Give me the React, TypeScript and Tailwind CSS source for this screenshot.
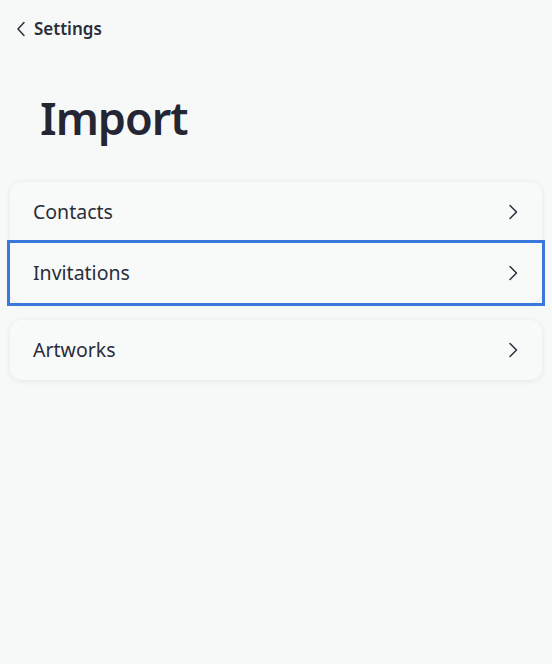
import React from "react";

function Chevron({ className = "" }: { className?: string }) {
  return (
    <svg width="12" height="16" viewBox="0 0 12 16" fill="none" className={className}>
      <path d="M3 1.5 L9.5 8 L3 14.5" stroke="#2b2e3a" strokeWidth="1.5" strokeLinecap="round" strokeLinejoin="round" />
    </svg>
  );
}

function BackChevron() {
  return (
    <svg width="10" height="16" viewBox="0 0 10 16" fill="none">
      <path d="M8 1.5 L2 8 L8 14.5" stroke="#2b2e3a" strokeWidth="1.5" strokeLinecap="round" strokeLinejoin="round" />
    </svg>
  );
}

function Row({ label, focused = false }: { label: string; focused?: boolean }) {
  return (
    <div
      className={
        "flex h-[60px] items-center justify-between pl-[23px] pr-[23px] " +
        (focused ? "outline-[3px] outline-solid outline-[#3a78dc]" : "")
      }
    >
      <span className="text-[19.5px] text-[#2a2d3a]">{label}</span>
      <Chevron />
    </div>
  );
}

export default function App() {
  return (
    <div
      className="min-h-[664px] w-[552px] bg-[#f7f9f9]"
      style={{ fontFamily: '"Noto Sans", "Open Sans", sans-serif' }}
    >
      <div className="flex items-center gap-[8px] pl-[16px] pt-[16px] h-[42px]">
        <BackChevron />
        <span className="text-[17px] font-semibold text-[#2a2d3a]">Settings</span>
      </div>
      <h1 className="pl-[40px] pt-[44px] text-[45px] font-semibold tracking-[-1px] leading-[64px] text-[#242733]">Import</h1>
      <div className="px-[10px] pt-[32px]">
        <div className="flex flex-col gap-[1px] rounded-[12px] bg-[#f8faf9] shadow-[0_1px_6px_rgba(0,0,0,0.08)]">
          <Row label="Contacts" />
          <Row label="Invitations" focused />
        </div>
        <div className="mt-[17px] rounded-[12px] bg-[#f8faf9] shadow-[0_1px_6px_rgba(0,0,0,0.08)]">
          <Row label="Artworks" />
        </div>
      </div>
    </div>
  );
}
